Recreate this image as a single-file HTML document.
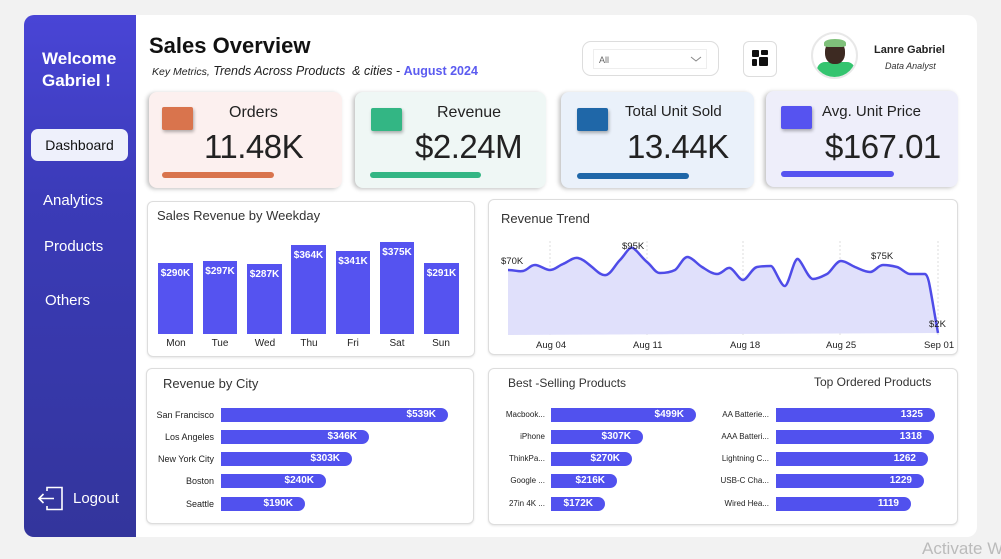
<!DOCTYPE html>
<html><head><meta charset="utf-8"><style>
*{margin:0;padding:0;box-sizing:border-box}
body{width:1001px;height:557px;background:#f2f2f2;font-family:"Liberation Sans",sans-serif;position:relative;overflow:hidden;color:#222}
.a{position:absolute}
.side{left:24px;top:15px;width:112px;height:522px;border-radius:10px 0 0 10px;background:linear-gradient(180deg,#4945d6 0%,#3b3bb8 35%,#33359c 100%)}
.main{left:136px;top:15px;width:841px;height:522px;background:#fff;border-radius:0 10px 10px 0}
.nav{color:#fff;font-size:15px}
.card{border-radius:8px;box-shadow:-2px 1px 4px rgba(0,0,0,.25)}
.sq{width:31px;height:23px;border-radius:2px;box-shadow:1px 2px 3px rgba(0,0,0,.3)}
.ct{font-size:16px;color:#222}
.cv{font-size:33px;color:#222;font-family:"Liberation Sans",sans-serif;letter-spacing:-0.5px}
.bar{height:6px;border-radius:3px}
.panel{border:1.5px solid #ddd;border-radius:6px;background:#fff;box-shadow:0 1px 2px rgba(0,0,0,.1)}
.pt{font-size:13px;color:#333}
.wb{background:#5553f0;color:#fff;font-size:10px;text-align:center;padding-top:5px;font-weight:bold}
.wl{font-size:10px;color:#222;text-align:center;width:40px}
.hb{background:#5151ee;border-radius:0 8px 8px 0;height:14px;color:#fff;font-size:10px;font-weight:bold;text-align:right;padding-right:12px;line-height:14px}
.hl{font-size:9px;color:#222;text-align:right;line-height:14px}
</style></head><body>
<div class="a side"></div>
<div class="a main"></div>
<div class="a" style="left:42px;top:48px;color:#fff;font-weight:bold;font-size:17px;line-height:22px">Welcome<br>Gabriel !</div>
<div class="a" style="left:31px;top:129px;width:97px;height:32px;background:#eef0fb;border-radius:7px;font-size:14px;line-height:32px;text-align:center;color:#111">Dashboard</div>
<div class="a nav" style="left:43px;top:192px">Analytics</div>
<div class="a nav" style="left:44px;top:238px">Products</div>
<div class="a nav" style="left:45px;top:292px">Others</div>
<svg class="a" style="left:37px;top:484px" width="30" height="30" viewBox="0 0 30 30" fill="none" stroke="#fff" stroke-width="1.6"><path d="M10 7V3.5h15v22H10V22"/><path d="M17 14.5H2M6.5 10L2 14.5l4.5 4.5"/></svg>
<div class="a" style="left:73px;top:490px;color:#fff;font-size:15px">Logout</div>

<div class="a" style="left:149px;top:33px;font-size:22px;font-weight:bold;color:#111;font-family:'Liberation Sans',sans-serif">Sales Overview</div>
<div class="a" style="left:152px;top:64px;font-size:12.5px;font-style:italic;color:#222"><span style="font-size:10.5px">Key Metrics,</span> Trends Across Products &nbsp;&amp; cities - <b style="color:#5b5bf0;font-style:normal">August 2024</b></div>

<div class="a" style="left:582px;top:41px;width:137px;height:35px;border:1.5px solid #ddd;border-radius:9px"></div>
<div class="a" style="left:593px;top:49px;width:114px;height:20px;border:1px solid #eee;font-size:9px;color:#666;padding:5px 0 0 5px">All</div>
<svg class="a" style="left:690px;top:55px" width="12" height="8"><path d="M1 2l5 4 5-4" stroke="#888" fill="none"/></svg>
<div class="a" style="left:743px;top:41px;width:34px;height:36px;border:1.5px solid #ddd;border-radius:6px"></div>
<svg class="a" style="left:752px;top:50px" width="16" height="16"><rect x="0" y="0" width="7" height="7" rx="1" fill="#111"/><rect x="9" y="0" width="7" height="5" rx="1" fill="#111"/><rect x="0" y="9" width="5" height="7" rx="1" fill="#111"/><rect x="7" y="7" width="9" height="9" rx="1" fill="#111"/></svg>
<div class="a" style="left:811px;top:32px;width:47px;height:47px;border-radius:50%;border:2px solid #e8e8e8;background:#fff;overflow:hidden">
<div class="a" style="left:4px;top:28px;width:38px;height:22px;background:#34c46f;border-radius:8px 8px 0 0"></div>
<div class="a" style="left:12px;top:7px;width:20px;height:23px;background:#3d2a22;border-radius:45%"></div>
<div class="a" style="left:11px;top:5px;width:22px;height:8px;background:#7fc07a;border-radius:50% 50% 20% 20%"></div></div>
<div class="a" style="left:874px;top:44px;font-size:11px;font-weight:bold;color:#222">Lanre Gabriel</div>
<div class="a" style="left:885px;top:61px;font-size:9px;font-style:italic;color:#333">Data Analyst</div>

<div class="a card" style="left:149px;top:92px;width:193px;height:96px;background:#fcf0ef"></div>
<div class="a sq" style="left:162px;top:107px;background:#d9744d"></div>
<div class="a ct" style="left:229px;top:104px">Orders</div>
<div class="a cv" style="left:204px;top:128px">11.48K</div>
<div class="a bar" style="left:162px;top:172px;width:112px;background:#d9744d"></div>

<div class="a card" style="left:355px;top:92px;width:191px;height:96px;background:#eff7f5"></div>
<div class="a sq" style="left:371px;top:108px;background:#33b684"></div>
<div class="a ct" style="left:437px;top:104px">Revenue</div>
<div class="a cv" style="left:415px;top:128px">$2.24M</div>
<div class="a bar" style="left:370px;top:172px;width:111px;background:#33b684"></div>

<div class="a card" style="left:561px;top:92px;width:193px;height:96px;background:#eaf1fa"></div>
<div class="a sq" style="left:577px;top:108px;background:#1f67a8"></div>
<div class="a ct" style="left:625px;top:103px;font-size:15px">Total Unit Sold</div>
<div class="a cv" style="left:627px;top:128px">13.44K</div>
<div class="a bar" style="left:577px;top:173px;width:112px;background:#1f67a8"></div>

<div class="a card" style="left:766px;top:91px;width:192px;height:96px;background:#eeeefa"></div>
<div class="a sq" style="left:781px;top:106px;background:#5653f0"></div>
<div class="a ct" style="left:822px;top:103px;font-size:15px">Avg. Unit Price</div>
<div class="a cv" style="left:825px;top:128px">$167.01</div>
<div class="a bar" style="left:781px;top:171px;width:113px;background:#5653f0"></div>

<div class="a panel" style="left:147px;top:201px;width:328px;height:156px"></div>
<div class="a pt" style="left:157px;top:208px">Sales Revenue by Weekday</div>
<div class="a wb" style="left:158px;top:263px;width:35px;height:71px">$290K</div>
<div class="a wb" style="left:203px;top:261px;width:34px;height:73px">$297K</div>
<div class="a wb" style="left:247px;top:264px;width:35px;height:70px">$287K</div>
<div class="a wb" style="left:291px;top:245px;width:35px;height:89px">$364K</div>
<div class="a wb" style="left:336px;top:251px;width:34px;height:83px">$341K</div>
<div class="a wb" style="left:380px;top:242px;width:34px;height:92px">$375K</div>
<div class="a wb" style="left:424px;top:263px;width:35px;height:71px">$291K</div>
<div class="a wl" style="left:156px;top:338px">Mon</div>
<div class="a wl" style="left:200px;top:338px">Tue</div>
<div class="a wl" style="left:245px;top:338px">Wed</div>
<div class="a wl" style="left:289px;top:338px">Thu</div>
<div class="a wl" style="left:333px;top:338px">Fri</div>
<div class="a wl" style="left:377px;top:338px">Sat</div>
<div class="a wl" style="left:421px;top:338px">Sun</div>

<div class="a panel" style="left:488px;top:199px;width:470px;height:156px"></div>
<div class="a pt" style="left:501px;top:211px">Revenue Trend</div>
<svg class="a" style="left:488px;top:199px" width="470" height="156">
<g stroke="#ddd" stroke-dasharray="2,2"><path d="M62 42V136M159 42V136M255 42V136M352 42V136M450 42V136"/></g>
<path d="M20 71 L35 72 L47 66 L62 71 L75 65 L90 59 L104 68 L118 76 L132 61 L145 49 L159 63 L172 74 L187 71 L200 58 L214 68 L229 75 L242 69 L255 81 L269 68 L283 67 L297 87 L310 60 L325 80 L339 75 L353 62 L367 68 L382 73 L395 66 L409 68 L422 75 L437 75 L442 93 L450 134 L20 136Z" fill="#e0e0fb"/>
<path d="M20 71 C28 71 30 73 35 72 S42 66 47 66 S57 71 62 71 S70 67 75 65 S85 58 90 59 S99 64 104 68 S113 77 118 76 S127 66 132 61 S141 47 145 49 S153 58 159 63 S167 74 172 74 S183 73 187 71 S195 57 200 58 S209 65 214 68 S224 75 229 75 S238 68 242 69 S251 81 255 81 S264 69 269 68 S280 67 283 67 S293 88 297 87 S306 58 310 60 S320 80 325 80 S335 77 339 75 S348 62 353 62 S362 66 367 68 S377 73 382 73 S390 66 395 66 S405 67 409 68 S418 75 422 75 L437 75 C441 76 442 90 450 134" fill="none" stroke="#4f4ce8" stroke-width="2.5"/>
<g font-size="9.5" fill="#222" font-family="Liberation Sans,sans-serif">
<text x="13" y="65">$70K</text><text x="134" y="50">$95K</text><text x="383" y="60">$75K</text><text x="441" y="128">$2K</text>
<text x="48" y="149">Aug 04</text><text x="145" y="149">Aug 11</text><text x="242" y="149">Aug 18</text><text x="338" y="149">Aug 25</text><text x="436" y="149">Sep 01</text></g>
</svg>

<div class="a panel" style="left:146px;top:368px;width:328px;height:156px"></div>
<div class="a pt" style="left:163px;top:376px">Revenue by City</div>
<div class="a hl" style="left:140px;top:408px;width:74px">San Francisco</div>
<div class="a hl" style="left:140px;top:430px;width:74px">Los Angeles</div>
<div class="a hl" style="left:140px;top:452px;width:74px">New York City</div>
<div class="a hl" style="left:140px;top:474px;width:74px">Boston</div>
<div class="a hl" style="left:140px;top:497px;width:74px">Seattle</div>
<div class="a hb" style="left:221px;top:408px;width:227px">$539K</div>
<div class="a hb" style="left:221px;top:430px;width:148px">$346K</div>
<div class="a hb" style="left:221px;top:452px;width:131px">$303K</div>
<div class="a hb" style="left:221px;top:474px;width:105px">$240K</div>
<div class="a hb" style="left:221px;top:497px;width:84px">$190K</div>

<div class="a panel" style="left:488px;top:368px;width:470px;height:157px"></div>
<div class="a pt" style="left:508px;top:376px;font-size:12px">Best -Selling Products</div>
<div class="a pt" style="left:814px;top:375px;font-size:12px">Top Ordered Products</div>
<div class="a hl" style="left:490px;top:408px;width:55px;font-size:8px">Macbook...</div>
<div class="a hl" style="left:490px;top:430px;width:55px;font-size:8px">iPhone</div>
<div class="a hl" style="left:490px;top:452px;width:55px;font-size:8px">ThinkPa...</div>
<div class="a hl" style="left:490px;top:474px;width:55px;font-size:8px">Google ...</div>
<div class="a hl" style="left:490px;top:497px;width:55px;font-size:8px">27in 4K ...</div>
<div class="a hb" style="left:551px;top:408px;width:145px">$499K</div>
<div class="a hb" style="left:551px;top:430px;width:92px">$307K</div>
<div class="a hb" style="left:551px;top:452px;width:81px">$270K</div>
<div class="a hb" style="left:551px;top:474px;width:66px">$216K</div>
<div class="a hb" style="left:551px;top:497px;width:54px">$172K</div>
<div class="a hl" style="left:705px;top:408px;width:64px;font-size:8px">AA Batterie...</div>
<div class="a hl" style="left:705px;top:430px;width:64px;font-size:8px">AAA Batteri...</div>
<div class="a hl" style="left:705px;top:452px;width:64px;font-size:8px">Lightning C...</div>
<div class="a hl" style="left:705px;top:474px;width:64px;font-size:8px">USB-C Cha...</div>
<div class="a hl" style="left:705px;top:497px;width:64px;font-size:8px">Wired Hea...</div>
<div class="a hb" style="left:776px;top:408px;width:159px">1325</div>
<div class="a hb" style="left:776px;top:430px;width:158px">1318</div>
<div class="a hb" style="left:776px;top:452px;width:152px">1262</div>
<div class="a hb" style="left:776px;top:474px;width:148px">1229</div>
<div class="a hb" style="left:776px;top:497px;width:135px">1119</div>

<div class="a" style="left:922px;top:539px;font-size:17px;color:#bbb;white-space:nowrap">Activate W</div>
</body></html>
